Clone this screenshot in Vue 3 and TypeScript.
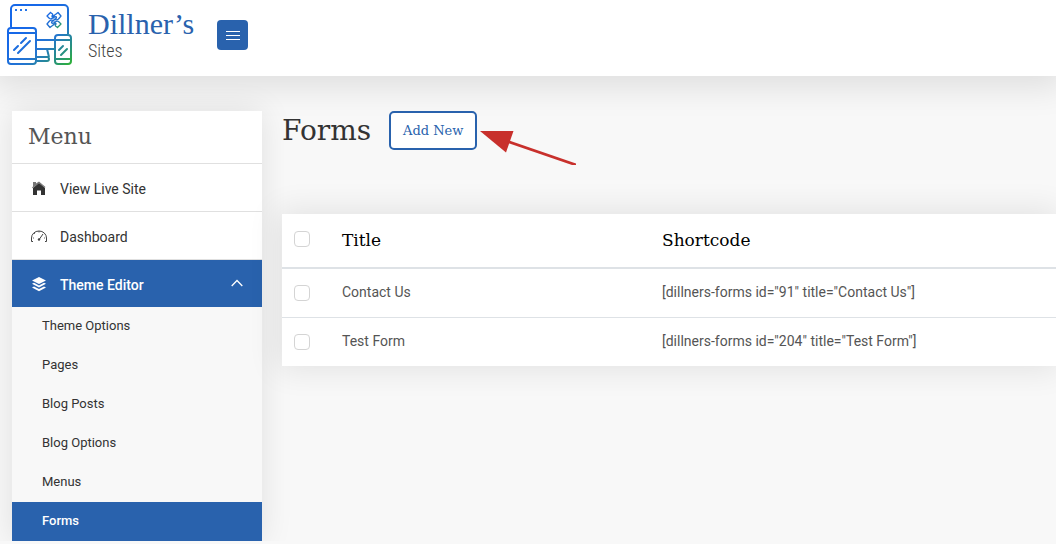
<script setup lang="ts">
import { ref } from 'vue'

interface FormRow {
  id: number
  title: string
}

const forms: FormRow[] = [
  { id: 91, title: 'Contact Us' },
  { id: 204, title: 'Test Form' },
]

const subItems: string[] = ['Theme Options', 'Pages', 'Blog Posts', 'Blog Options', 'Menus', 'Forms']
const current = ref<string>('Forms')
const editorOpen = ref<boolean>(true)
const selected = ref<number[]>([])

function toggleAll(event: Event): void {
  const box = event.target as HTMLInputElement
  selected.value = box.checked ? forms.map((f) => f.id) : []
}

function shortcode(form: FormRow): string {
  return `[dillners-forms id="${form.id}" title="${form.title}"]`
}
</script>

<template>
  <div class="page">
    <header class="topbar">
      <a href="#" class="brand" aria-label="Dillner's Sites">
        <svg class="logo" viewBox="0 0 68 64" width="68" height="64" fill="none" stroke-width="2" aria-hidden="true">
          <defs>
            <linearGradient id="brandGradient" gradientUnits="userSpaceOnUse" x1="26" y1="18" x2="66" y2="62">
              <stop offset="0" stop-color="#1668e8" />
              <stop offset="0.45" stop-color="#2475cf" />
              <stop offset="0.75" stop-color="#279080" />
              <stop offset="1" stop-color="#2fb52f" />
            </linearGradient>
            <linearGradient id="markGradient" gradientUnits="userSpaceOnUse" x1="42" y1="9" x2="56" y2="25">
              <stop offset="0" stop-color="#1668e8" />
              <stop offset="0.6" stop-color="#2270cc" />
              <stop offset="1" stop-color="#2fb52f" />
            </linearGradient>
          </defs>
          <g stroke="url(#brandGradient)">
            <path d="M5 24V6a4 4 0 0 1 4-4h49a4 4 0 0 1 4 4v25M31 37h18M31 46h18M41 46l2 8M31 54h10a2 2 0 0 1 2 2v0a2 2 0 0 1-2 2H31" />
            <rect x="2" y="25" width="28" height="36" rx="3" />
            <path d="M2 30h28M2 56h28" />
            <rect x="49" y="32" width="16" height="29" rx="3" />
            <path d="M49 37h16M49 56h16" />
            <path d="M8 47l4-4M15 40l5-5M12 50l12-12M53 47l4-4M55 52l6-6" stroke-linecap="round" />
          </g>
          <path d="M9 7h2M14 7h2M19 7h2" stroke="#2475e8" />
          <g stroke="url(#markGradient)" stroke-width="1.300" stroke-linejoin="round" stroke-linecap="round">
            <path d="M44.500 9.500L41 13l2.500 2.500c1.500 1 2.500 0 4-1s3-1 3 0-1 1.500-2 2.200M44.500 9.500l2 1.500c1 1-1 1.500-.5 2.300s2-.8 3.500-1.800L52 9.500l3 3.500-2.500 3c-1.500 1.200-3 1-4.500 0" />
            <path d="M51.500 24.500L55 21l-2.500-2.500c-1.500-1-2.500 0-4 1s-3 1-3 0 1-1.500 2-2.200M51.500 24.500l-2-1.500c-1-1 1-1.500.5-2.300s-2 .8-3.500 1.800L44 24.500 41 21l2.500-3c1.500-1.200 3-1 4.500 0" />
          </g>
        </svg>
        <span class="brand-text">
          <span class="brand-name">Dillner’s</span>
          <span class="brand-sub">Sites</span>
        </span>
      </a>
      <button class="burger" type="button" aria-label="Toggle menu">
        <svg viewBox="0 0 14 11" width="14" height="11" stroke="#fff" aria-hidden="true">
          <path d="M0 1.500h14M0 5.500h14M0 9.500h14" />
        </svg>
      </button>
    </header>

    <div class="body">
      <nav class="sidebar" aria-label="Menu">
        <h2 class="menu-title">Menu</h2>
        <a href="#" class="item">
          <svg viewBox="0 0 16 16" width="16" height="16" aria-hidden="true">
            <path d="M1 6.500L2 5.500V1h3v1.500L8 .5l6.500 5.500-.7.700L8 2 1.700 7.200z" fill="#777" />
            <path d="M2 7l6-5 6 5v7h-4V9.500H6V14H2z" fill="#333" />
          </svg>
          <span>View Live Site</span>
        </a>
        <a href="#" class="item">
          <svg viewBox="0 0 16 16" width="16" height="16" fill="none" stroke="#444" aria-hidden="true">
            <path d="M2 12.500H.500V9a7.500 7 0 0 1 15 0v3.500H14" />
            <path d="M8 2v1.500M3 4l1 1M2 9h1M13 9h1" stroke-width=".8" />
            <path d="M12 5l-3.500 5" />
            <circle cx="8" cy="10.500" r="1.200" fill="#444" stroke="none" />
          </svg>
          <span>Dashboard</span>
        </a>
        <button type="button" class="item active" :aria-expanded="editorOpen" @click="editorOpen = !editorOpen">
          <svg viewBox="0 0 16 16" width="16" height="16" fill="#fff" aria-hidden="true">
            <path d="M8 0l7 3.400L8 7 1 3.400zM1 6.800l2-1 5 2.600 5-2.600 2 1-7 3.700zM1 10.500l2-1 5 2.600 5-2.600 2 1-7 3.800z" />
          </svg>
          <span>Theme Editor</span>
          <svg class="chevron" viewBox="0 0 12 12" width="12" height="12" fill="none" stroke="#fff" aria-hidden="true">
            <path d="M.7 7L6 1.500 11.300 7" stroke-width="1.300" />
          </svg>
        </button>
        <ul v-if="editorOpen" class="submenu">
          <li v-for="name in subItems" :key="name">
            <a href="#" class="sub" :class="{ current: name === current }" @click.prevent="current = name">{{ name }}</a>
          </li>
        </ul>
      </nav>

      <main class="content">
        <div class="heading">
          <h1>Forms</h1>
          <div class="add-wrap">
            <button type="button" class="add">Add New</button>
            <svg class="arrow" viewBox="0 0 96 34" width="96" height="34" aria-hidden="true">
              <path d="M0 0H33.500L26 21.500z" fill="#c8302c" />
              <path d="M28 10.500L96 34" stroke="#c8302c" stroke-width="2.600" />
            </svg>
          </div>
        </div>

        <table class="forms">
          <colgroup>
            <col class="col-check" />
            <col class="col-title" />
            <col />
          </colgroup>
          <thead>
            <tr>
              <th><input type="checkbox" aria-label="Select all forms" :checked="selected.length === forms.length" @change="toggleAll" /></th>
              <th scope="col">Title</th>
              <th scope="col">Shortcode</th>
            </tr>
          </thead>
          <tbody>
            <tr v-for="form in forms" :key="form.id">
              <td><input v-model="selected" type="checkbox" :value="form.id" :aria-label="`Select ${form.title}`" /></td>
              <td>{{ form.title }}</td>
              <td>{{ shortcode(form) }}</td>
            </tr>
          </tbody>
        </table>
      </main>
    </div>
  </div>
</template>

<style>
html {
  background: #f8f8f8;
}

body {
  margin: 0;
  overflow: hidden;
}
</style>

<style scoped>
.page {
  font-family: Roboto, "Liberation Sans", sans-serif;
  font-size: 14px;
  line-height: 20px;
  color: #333;
}

.page *,
.page {
  box-sizing: border-box;
}

.topbar {
  display: flex;
  align-items: center;
  height: 76px;
  padding: 0 6px 6px;
  background: #fff;
  box-shadow: 0 4px 32px 8px rgba(0, 0, 0, 0.1);
}

.brand {
  display: flex;
  align-items: center;
  gap: 14px;
  width: 211px;
  text-decoration: none;
}

.brand-text {
  display: flex;
  flex-direction: column;
}

.brand-name {
  font-family: "Roboto Slab", "Liberation Serif", serif;
  font-size: 30px;
  line-height: 32px;
  color: #2962ad;
}

.brand-sub {
  font-family: "Liberation Sans Narrow", "Roboto Condensed", "DejaVu Sans Condensed", sans-serif;
  font-size: 18px;
  font-weight: 300;
  line-height: 22px;
  color: #444;
}

.burger {
  display: flex;
  align-items: center;
  justify-content: center;
  width: 31px;
  height: 30px;
  padding: 0;
  border: 0;
  border-radius: 4px;
  background: #2962ad;
}

.body {
  display: flex;
  gap: 20px;
  padding: 35px 0 0 12px;
}

.sidebar {
  flex: none;
  width: 250px;
  background: #f8f8f8;
  box-shadow: 0 0 30px rgba(0, 0, 0, 0.1);
}

.menu-title {
  margin: 0;
  padding: 0 16px;
  border-bottom: 1px solid #e0e0e0;
  background: #fff;
  font-family: "Roboto Slab", "DejaVu Serif", serif;
  font-size: 22px;
  font-weight: 400;
  line-height: 52px;
  color: #555;
}

.item {
  display: flex;
  align-items: center;
  gap: 13px;
  width: 100%;
  height: 48px;
  padding: 2px 19px 0;
  border: 0;
  border-bottom: 1px solid #e0e0e0;
  background: #fff;
  font: inherit;
  color: #333;
  text-decoration: none;
}

.item.active {
  height: 47px;
  border-bottom: 0;
  background: #2962ad;
  color: #fff;
  font-weight: 500;
}

.chevron {
  margin-left: auto;
}

.submenu {
  margin: 0;
  padding: 0;
  list-style: none;
}

.sub {
  display: block;
  height: 39px;
  padding: 0 30px;
  font-size: 13px;
  line-height: 38px;
  color: #333;
  text-decoration: none;
}

.sub.current {
  background: #2962ad;
  color: #fff;
  font-weight: 500;
}

.content {
  flex: 1;
  min-width: 0;
}

.heading {
  display: flex;
  align-items: center;
  gap: 18px;
  margin-bottom: 64px;
}

h1 {
  margin: 0;
  font-family: "Roboto Slab", "DejaVu Serif", serif;
  font-size: 28px;
  font-weight: 400;
  line-height: 39px;
  color: #333;
}

.add-wrap {
  position: relative;
}

.add {
  display: block;
  height: 39px;
  padding: 0 12px;
  border: 2px solid #2962ad;
  border-radius: 5px;
  background: #fff;
  font-family: "Roboto Slab", "DejaVu Serif", serif;
  font-size: 13px;
  color: #2962ad;
}

.arrow {
  position: absolute;
  top: 20px;
  left: 91px;
}

.forms {
  width: 100%;
  table-layout: fixed;
  border-collapse: separate;
  border-spacing: 0;
  background: #fff;
  box-shadow: 0 0 30px 4px rgba(0, 0, 0, 0.09);
}

.col-check {
  width: 48px;
}

.col-title {
  width: 320px;
}

th,
td {
  padding: 13px 12px 15px;
  text-align: left;
  vertical-align: top;
}

th {
  padding: 14px 12px 15px;
  border-bottom: 2px solid #dee2e6;
  font-family: "Roboto Slab", "DejaVu Serif", serif;
  font-size: 17px;
  font-weight: 400;
  line-height: 24px;
  color: #000;
}

td {
  color: #555;
}

tbody tr + tr td {
  border-top: 1px solid #dee2e6;
}

input {
  display: block;
  appearance: none;
  width: 16px;
  height: 16px;
  margin: 3px 0 0;
  border: 1px solid #d4d4d4;
  border-radius: 4px;
  background: #fff;
}

input:checked {
  border-color: #2962ad;
  background: #2962ad;
}
</style>
